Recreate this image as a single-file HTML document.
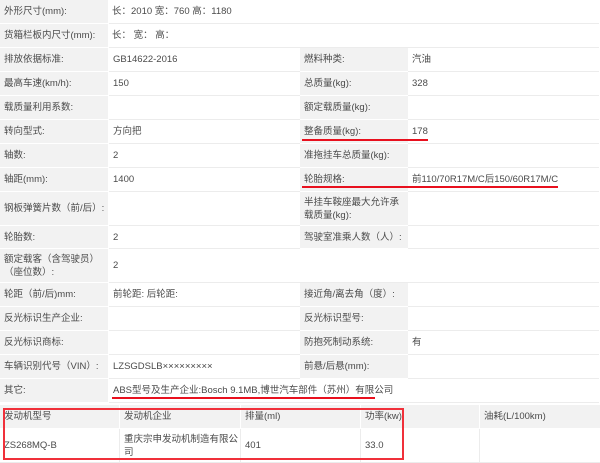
<!DOCTYPE html>
<html><head><meta charset="utf-8"><style>
body{margin:0;width:600px;height:463px;background:#fff;position:relative;overflow:hidden;font-family:"Liberation Sans","Noto Sans CJK SC",sans-serif;font-size:9.5px;color:#4a4a4a}
.c{position:absolute;box-sizing:border-box;display:flex;align-items:center;padding-left:4px;line-height:13px}
.l{background:#f2f2f2;border-bottom:1px solid #fff}
.v{background:#fff;border-bottom:1px solid #ececec;padding-left:4px}
.u{position:absolute;height:2px;background:#e8101e}
.box{position:absolute;border:2px solid #f0303a;box-sizing:border-box}
</style></head><body>
<div class="c l" style="left:0;top:0;width:108px;height:24px">外形尺寸(mm):</div>
<div class="c v" style="left:109px;top:0;width:490px;height:24px;padding-left:3px">长：2010 宽：760 高：1180</div>
<div class="c l" style="left:0;top:24px;width:108px;height:24px">货箱栏板内尺寸(mm):</div>
<div class="c v" style="left:109px;top:24px;width:490px;height:24px;padding-left:3px">长：&nbsp;宽：&nbsp;高：</div>

<div class="c l" style="left:0;top:48px;width:108px;height:24px">排放依据标准:</div>
<div class="c v" style="left:109px;top:48px;width:191px;height:24px">GB14622-2016</div>
<div class="c l" style="left:300px;top:48px;width:108px;height:24px">燃料种类:</div>
<div class="c v" style="left:408px;top:48px;width:191px;height:24px">汽油</div>

<div class="c l" style="left:0;top:72px;width:108px;height:24px">最高车速(km/h):</div>
<div class="c v" style="left:109px;top:72px;width:191px;height:24px">150</div>
<div class="c l" style="left:300px;top:72px;width:108px;height:24px">总质量(kg):</div>
<div class="c v" style="left:408px;top:72px;width:191px;height:24px">328</div>

<div class="c l" style="left:0;top:96px;width:108px;height:24px">载质量利用系数:</div>
<div class="c v" style="left:109px;top:96px;width:191px;height:24px"></div>
<div class="c l" style="left:300px;top:96px;width:108px;height:24px">额定载质量(kg):</div>
<div class="c v" style="left:408px;top:96px;width:191px;height:24px"></div>

<div class="c l" style="left:0;top:120px;width:108px;height:24px">转向型式:</div>
<div class="c v" style="left:109px;top:120px;width:191px;height:24px">方向把</div>
<div class="c l" style="left:300px;top:120px;width:108px;height:24px">整备质量(kg):</div>
<div class="c v" style="left:408px;top:120px;width:191px;height:24px">178</div>

<div class="c l" style="left:0;top:144px;width:108px;height:24px">轴数:</div>
<div class="c v" style="left:109px;top:144px;width:191px;height:24px">2</div>
<div class="c l" style="left:300px;top:144px;width:108px;height:24px">准拖挂车总质量(kg):</div>
<div class="c v" style="left:408px;top:144px;width:191px;height:24px"></div>

<div class="c l" style="left:0;top:168px;width:108px;height:24px">轴距(mm):</div>
<div class="c v" style="left:109px;top:168px;width:191px;height:24px">1400</div>
<div class="c l" style="left:300px;top:168px;width:108px;height:24px">轮胎规格:</div>
<div class="c v" style="left:408px;top:168px;width:191px;height:24px">前110/70R17M/C后150/60R17M/C</div>

<div class="c l" style="left:0;top:192px;width:108px;height:34px">钢板弹簧片数（前/后）:</div>
<div class="c v" style="left:109px;top:192px;width:191px;height:34px"></div>
<div class="c l" style="left:300px;top:192px;width:108px;height:34px">半挂车鞍座最大允许承载质量(kg):</div>
<div class="c v" style="left:408px;top:192px;width:191px;height:34px"></div>

<div class="c l" style="left:0;top:226px;width:108px;height:23px">轮胎数:</div>
<div class="c v" style="left:109px;top:226px;width:191px;height:23px">2</div>
<div class="c l" style="left:300px;top:226px;width:108px;height:23px">驾驶室准乘人数（人）:</div>
<div class="c v" style="left:408px;top:226px;width:191px;height:23px"></div>

<div class="c l" style="left:0;top:249px;width:108px;height:34px">额定载客（含驾驶员）<br>（座位数）:</div>
<div class="c v" style="left:109px;top:249px;width:490px;height:34px">2</div>

<div class="c l" style="left:0;top:283px;width:108px;height:24px">轮距（前/后)mm:</div>
<div class="c v" style="left:109px;top:283px;width:191px;height:24px">前轮距: 后轮距:</div>
<div class="c l" style="left:300px;top:283px;width:108px;height:24px">接近角/离去角（度）:</div>
<div class="c v" style="left:408px;top:283px;width:191px;height:24px"></div>

<div class="c l" style="left:0;top:307px;width:108px;height:24px">反光标识生产企业:</div>
<div class="c v" style="left:109px;top:307px;width:191px;height:24px"></div>
<div class="c l" style="left:300px;top:307px;width:108px;height:24px">反光标识型号:</div>
<div class="c v" style="left:408px;top:307px;width:191px;height:24px"></div>

<div class="c l" style="left:0;top:331px;width:108px;height:24px">反光标识商标:</div>
<div class="c v" style="left:109px;top:331px;width:191px;height:24px"></div>
<div class="c l" style="left:300px;top:331px;width:108px;height:24px">防抱死制动系统:</div>
<div class="c v" style="left:408px;top:331px;width:191px;height:24px">有</div>

<div class="c l" style="left:0;top:355px;width:108px;height:24px">车辆识别代号（VIN）:</div>
<div class="c v" style="left:109px;top:355px;width:191px;height:24px">LZSGDSLB×××××××××</div>
<div class="c l" style="left:300px;top:355px;width:108px;height:24px">前悬/后悬(mm):</div>
<div class="c v" style="left:408px;top:355px;width:191px;height:24px"></div>

<div class="c l" style="left:0;top:379px;width:108px;height:24px">其它:</div>
<div class="c v" style="left:109px;top:379px;width:490px;height:24px">ABS型号及生产企业:Bosch 9.1MB,博世汽车部件（苏州）有限公司</div>

<div class="c l" style="left:0;top:405px;width:120px;height:24px;border-right:1px solid #fff">发动机型号</div>
<div class="c l" style="left:120px;top:405px;width:121px;height:24px;border-right:1px solid #fff">发动机企业</div>
<div class="c l" style="left:241px;top:405px;width:120px;height:24px;border-right:1px solid #fff">排量(ml)</div>
<div class="c l" style="left:361px;top:405px;width:119px;height:24px;border-right:1px solid #fff">功率(kw)</div>
<div class="c l" style="left:480px;top:405px;width:120px;height:24px">油耗(L/100km)</div>
<div class="c v" style="left:0;top:429px;width:120px;height:34px;border-right:1px solid #ececec">ZS268MQ-B</div>
<div class="c v" style="left:120px;top:429px;width:121px;height:34px;border-right:1px solid #ececec">重庆宗申发动机制造有限公司</div>
<div class="c v" style="left:241px;top:429px;width:120px;height:34px;border-right:1px solid #ececec">401</div>
<div class="c v" style="left:361px;top:429px;width:119px;height:34px;border-right:1px solid #ececec">33.0</div>
<div class="c v" style="left:480px;top:429px;width:120px;height:34px"></div>

<div class="u" style="left:302px;top:139px;width:126px"></div>
<div class="u" style="left:302px;top:186px;width:256px"></div>
<div class="u" style="left:112px;top:397px;width:263px"></div>
<div class="box" style="left:3px;top:408px;width:401px;height:52px"></div>
</body></html>
